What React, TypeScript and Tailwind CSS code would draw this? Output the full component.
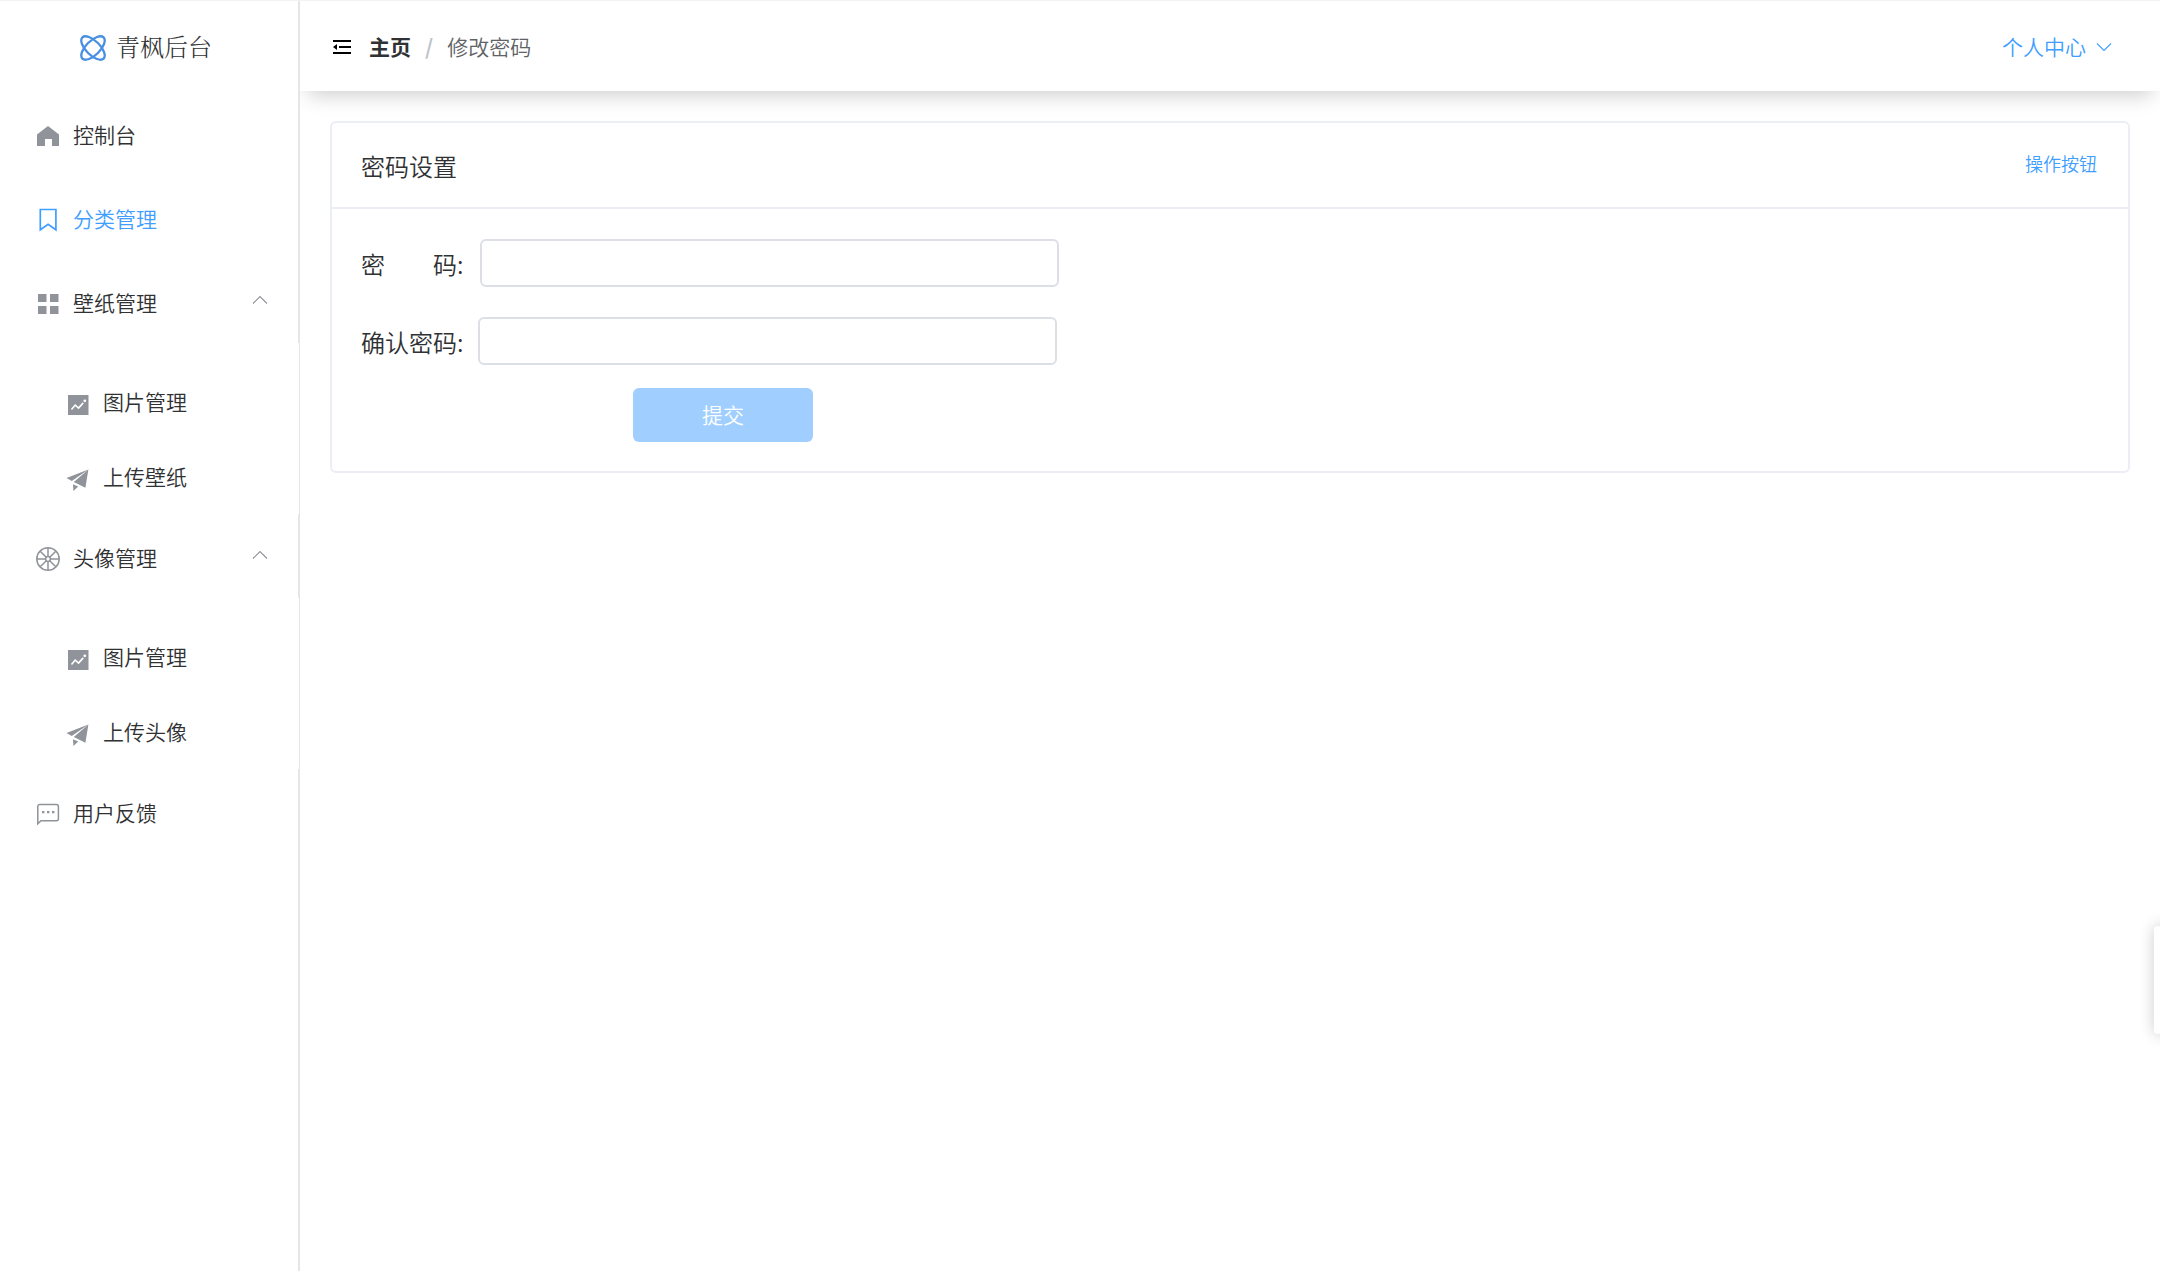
import { useState } from "react";
import type { ReactNode } from "react";
import clsx from "clsx";

interface MenuItem {
  id: string;
  label: string;
  icon: ReactNode;
  children?: MenuItem[];
}

const HomeIcon = () => (
  <svg viewBox="0 0 24 24" className="size-6" fill="currentColor">
    <path d="M12 2 23 10.5V22h-7v-7H9v7H1V10.5z" />
  </svg>
);

const BookmarkIcon = () => (
  <svg viewBox="0 0 24 24" className="size-6" fill="none" stroke="currentColor" strokeWidth="1.7">
    <path d="M4.3 1.5h15.6v20.3L12.1 16.2l-7.8 5.6z" />
  </svg>
);

const MenuIcon = () => (
  <svg viewBox="0 0 24 24" className="size-6" fill="currentColor">
    <path d="M2 2h8.5v8H2zM14 2h8.5v8H14zM2 14h8.5v8H2zM14 14h8.5v8H14z" />
  </svg>
);

const WheelIcon = () => (
  <svg viewBox="0 0 24 24" className="size-6" fill="none" stroke="currentColor" strokeWidth="1.5">
    <circle cx="12" cy="12" r="11.2" />
    <circle cx="12" cy="12" r="2.4" />
    <path d="M12 1v8.6M12 14.4V23M1 12h8.6M14.4 12H23M4.2 4.2l6.1 6.1M13.7 13.7l6.1 6.1M4.2 19.8l6.1-6.1M13.7 10.3l6.1-6.1" />
  </svg>
);

const PictureIcon = () => (
  <svg viewBox="0 0 24 24" className="size-6">
    <path d="M2 2h20.5v20H2z" fill="currentColor" />
    <path d="m5.5 16.5 3.7-4.4 3.4 3 4.6-5.2" fill="none" stroke="#fff" strokeWidth="1.6" />
    <circle cx="18.8" cy="7.8" r="1.4" fill="#fff" />
  </svg>
);

const PlaneIcon = () => (
  <svg viewBox="0 0 24 24" className="size-6" fill="currentColor">
    <path d="M22.4 1.5.5 10l5.3 2.9zM22.4 1.5l-3 18.2-11.6-5.6zM7 16.2l5.2 2.4L7.4 23z" />
  </svg>
);

const ChatIcon = () => (
  <svg viewBox="0 0 24 24" className="size-6" fill="none" stroke="currentColor" strokeWidth="1.5">
    <path d="M1.8 21.8V4.4a2 2 0 0 1 2-2h16.6a2 2 0 0 1 2 2v12.4a2 2 0 0 1-2 2H5z" />
    <path d="M6 10.2h2.4M11 10.2h2.4M16 10.2h2.4" strokeWidth="2.2" />
  </svg>
);

const LogoIcon = () => (
  <svg viewBox="0 0 26 26" className="size-[26px]" fill="none" stroke="#4a90e2" strokeWidth="2.3">
    <ellipse cx="13" cy="13" rx="15" ry="7" transform="rotate(45 13 13)" />
    <ellipse cx="13" cy="13" rx="15" ry="7" transform="rotate(-45 13 13)" />
  </svg>
);

const FoldIcon = () => (
  <svg viewBox="0 0 18 16" className="h-4 w-[18px]" fill="currentColor">
    <path d="M0 1h18v2H0zM6 7h12v2H6zM0 13h18v2H0zM0 8l4-3v6z" />
  </svg>
);

const Chevron = ({ up = false }: { up?: boolean }) => (
  <svg
    viewBox="0 0 16 10"
    className={clsx("h-2.5 w-4", up && "rotate-180")}
    fill="none"
    stroke="currentColor"
    strokeWidth="1.1"
  >
    <path d="m1 1.5 7 7 7-7" />
  </svg>
);

const menu: MenuItem[] = [
  { id: "home", label: "控制台", icon: <HomeIcon /> },
  { id: "category", label: "分类管理", icon: <BookmarkIcon /> },
  {
    id: "wallpaper",
    label: "壁纸管理",
    icon: <MenuIcon />,
    children: [
      { id: "wallpaper-list", label: "图片管理", icon: <PictureIcon /> },
      { id: "wallpaper-upload", label: "上传壁纸", icon: <PlaneIcon /> },
    ],
  },
  {
    id: "avatar",
    label: "头像管理",
    icon: <WheelIcon />,
    children: [
      { id: "avatar-list", label: "图片管理", icon: <PictureIcon /> },
      { id: "avatar-upload", label: "上传头像", icon: <PlaneIcon /> },
    ],
  },
  { id: "feedback", label: "用户反馈", icon: <ChatIcon /> },
];

function Sidebar() {
  const [active, setActive] = useState("category");
  const [opened, setOpened] = useState(["wallpaper", "avatar"]);

  const toggle = (id: string) =>
    setOpened((prev) =>
      prev.includes(id) ? prev.filter((item) => item !== id) : [...prev, id],
    );

  return (
    <aside className="z-10 flex w-[300px] shrink-0 flex-col bg-white">
      <div className="flex h-[90px] items-center gap-2.5 border-r-2 border-[#e6e6e6] pt-1 pl-20">
        <LogoIcon />
        <span className="font-['Liberation_Serif','Noto_Serif_CJK_SC','Noto_Sans_CJK_SC',serif] text-2xl font-light text-[#303133]">
          青枫后台
        </span>
      </div>

      <ul>
        {menu.map((item) => (
          <li key={item.id}>
            <button
              type="button"
              onClick={() => (item.children ? toggle(item.id) : setActive(item.id))}
              className={clsx(
                "flex h-[84px] w-full items-center border-r-2 border-[#e6e6e6] pt-1.5 pr-[30px] pl-[30px]",
                active === item.id ? "text-[#409eff]" : "text-[#303133]",
              )}
            >
              <span
                className={clsx(
                  "mr-[7px] flex w-9 justify-center",
                  active !== item.id && "text-[#909399]",
                )}
              >
                {item.icon}
              </span>
              <span className="pb-0.5">{item.label}</span>
              {item.children && (
                <span className="mb-2 ml-auto text-[#909399]">
                  <Chevron up={opened.includes(item.id)} />
                </span>
              )}
            </button>

            {item.children && opened.includes(item.id) && (
              <ul className="border-r border-[#e6e6e6] pt-[21px]">
                {item.children.map((child) => (
                  <li key={child.id}>
                    <button
                      type="button"
                      onClick={() => setActive(child.id)}
                      className={clsx(
                        "flex h-[75px] w-full items-center pt-0.5 pl-[60px]",
                        active === child.id ? "text-[#409eff]" : "text-[#303133]",
                      )}
                    >
                      <span className="mr-[7px] flex w-9 justify-center pt-1 text-[#909399]">
                        {child.icon}
                      </span>
                      <span className="pb-0.5">{child.label}</span>
                    </button>
                  </li>
                ))}
              </ul>
            )}
          </li>
        ))}
      </ul>
      <div className="flex-1 border-r-2 border-[#e6e6e6]" />
    </aside>
  );
}

function Header() {
  return (
    <header className="flex h-[90px] items-center bg-white pt-0.5 pr-12 pl-[33px] shadow-[0_12px_20px_-8px_rgba(0,0,0,0.2)]">
      <button type="button" aria-label="折叠菜单" className="mr-[18px] text-black">
        <FoldIcon />
      </button>
      <nav className="flex items-center">
        <a href="#home" className="font-bold text-[#303133]">
          主页
        </a>
        <span className="mx-3.5 font-bold text-[#c0c4cc]">/</span>
        <span className="text-[#606266]">修改密码</span>
      </nav>
      <button type="button" className="ml-auto flex items-center gap-2.5 text-[#409eff]">
        个人中心
        <Chevron />
      </button>
    </header>
  );
}

function PasswordCard() {
  const [password, setPassword] = useState("");
  const [confirm, setConfirm] = useState("");

  return (
    <section className="m-[30px] rounded-md border-2 border-[#ebeef5] bg-white text-[#303133]">
      <div className="flex h-[86px] items-center justify-between border-b-2 border-[#ebeef5] pr-[31px] pl-[29px]">
        <h2 className="pt-0.5 text-2xl">密码设置</h2>
        <button type="button" className="pb-1 text-lg text-[#409eff]">
          操作按钮
        </button>
      </div>

      <form className="px-[29px] pt-[30px] pb-[29px]" onSubmit={(e) => e.preventDefault()}>
        <div className="mb-[30px] flex items-center">
          <label htmlFor="password" className="w-[119px] pt-0.5 text-2xl whitespace-pre">
            密&emsp;&emsp;码:
          </label>
          <input
            id="password"
            type="password"
            value={password}
            onChange={(e) => setPassword(e.target.value)}
            className="h-12 w-[579px] rounded-md border-2 border-[#dcdfe6] px-4 outline-none"
          />
        </div>
        <div className="mb-[23px] flex items-center">
          <label htmlFor="confirm" className="w-[117px] pt-0.5 text-2xl">
            确认密码:
          </label>
          <input
            id="confirm"
            type="password"
            value={confirm}
            onChange={(e) => setConfirm(e.target.value)}
            className="h-12 w-[579px] rounded-md border-2 border-[#dcdfe6] px-4 outline-none"
          />
        </div>
        <button
          type="submit"
          disabled={!password || password !== confirm}
          className="ml-[272px] block h-[54px] w-[180px] rounded-md bg-[#409eff] text-white disabled:bg-[#a0cfff]"
        >
          提交
        </button>
      </form>
    </section>
  );
}

export default function App() {
  return (
    <div className="relative flex min-h-screen overflow-hidden border-t border-[#f2f2f2] bg-white font-['Noto_Sans_CJK_SC',sans-serif] text-[21px] font-[350]">
      <Sidebar />
      <main className="min-w-0 flex-1">
        <Header />
        <PasswordCard />
      </main>

      {/* panel lateral oculto */}
      <div className="absolute top-[925px] -right-6 h-[108px] w-[30px] rounded-sm bg-white shadow-[0_0_16px_rgba(0,0,0,0.2)]" />
    </div>
  );
}
